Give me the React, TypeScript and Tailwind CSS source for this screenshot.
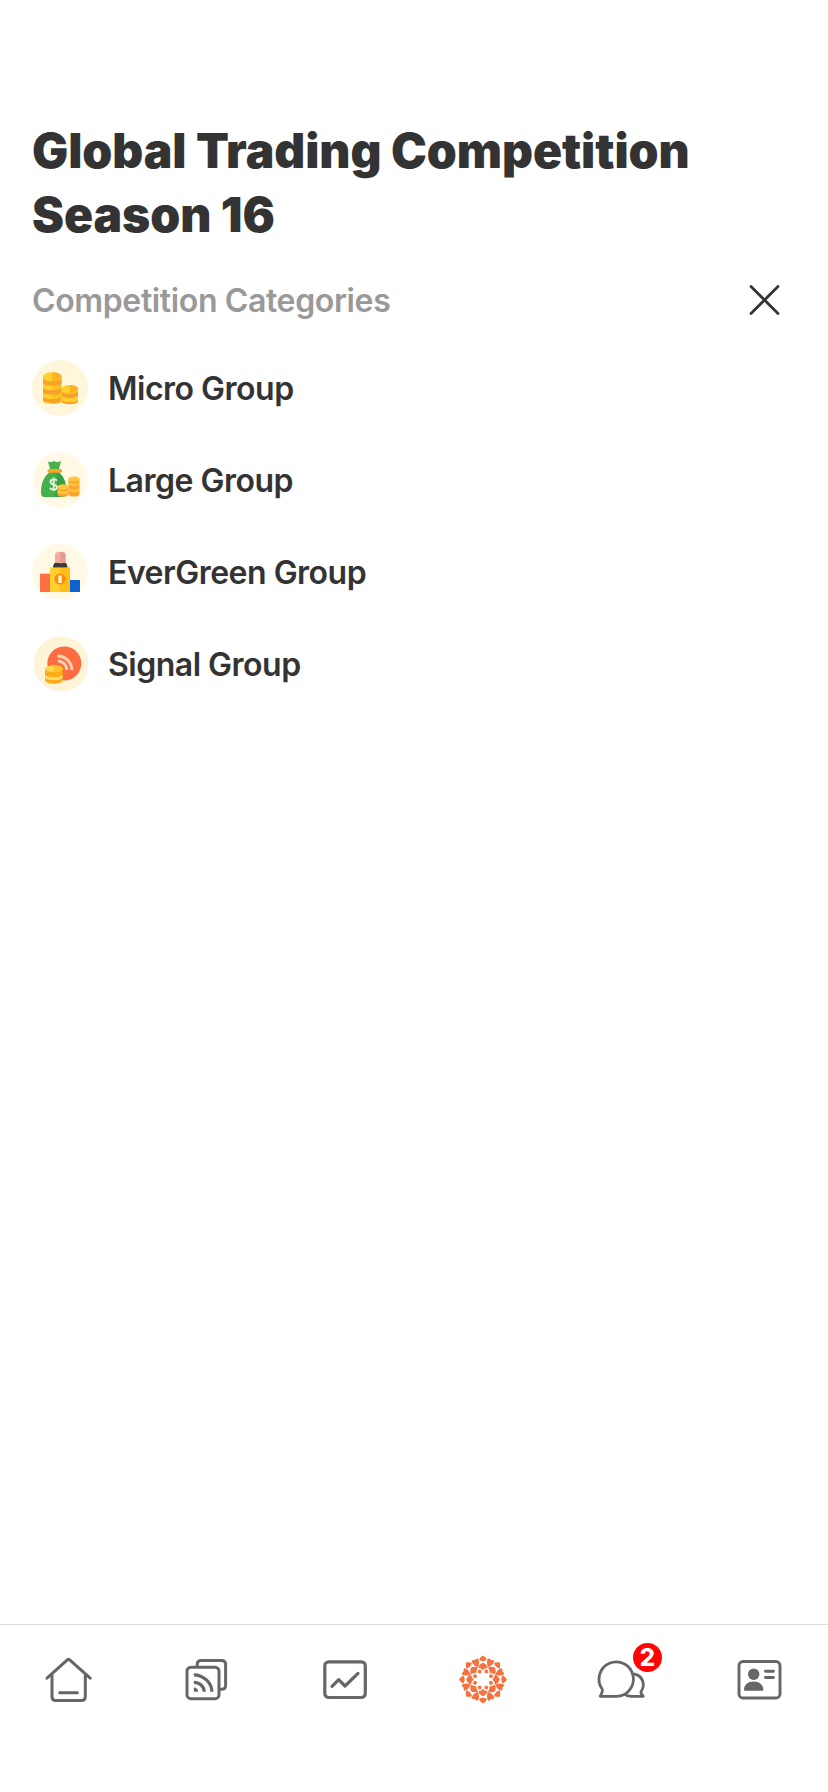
import type { ReactNode } from 'react';

function MicroIcon() {
  return (
    <svg viewBox="12 10 56 56" className="h-14 w-14 shrink-0">
      <circle cx="40" cy="38" r="28" fill="#fff6dc" />
      <path d="M23 26v25c0 4 18.500 4 18.500 0V26z" fill="#ffd02c" />
      <path d="M32 26h9.500v25c0 2-4 3-9.500 3z" fill="#fcc022" />
      <path d="M23 29v4.500c3 3 15.500 3 18.500 0V29c-3 3-15.500 3-18.500 0zM23 38v4.500c3 3 15.500 3 18.500 0V38c-3 3-15.500 3-18.500 0zM23 47v3.500c3 3 15.500 3 18.500 0V47c-3 3-15.500 3-18.500 0z" fill="#f7a12b" />
      <ellipse cx="32.200" cy="26.500" rx="9.300" ry="4.300" fill="#ffd02c" />
      <path d="M32.200 22.200c5 0 9.300 2 9.300 4.300s-4 4.300-9.300 4.300z" fill="#fbb420" />
      <path d="M41.500 39v12c0 4 16.500 4 16.500 0V39z" fill="#ffd02c" />
      <path d="M41.500 41.500v4.500c3 2.500 13.500 2.500 16.500 0v-4.500c-3 3-13.500 3-16.500 0zM41.500 50v2c3 3 13.500 3 16.500 0v-2c-3 3-13.500 3-16.500 0z" fill="#f7a12b" />
      <ellipse cx="49.700" cy="39" rx="8.300" ry="4" fill="#ffd02c" />
      <path d="M49.700 35c4.500 0 8.300 2 8.300 4s-4 4-8.300 4z" fill="#fbb420" />
    </svg>
  );
}

function LargeIcon() {
  return (
    <svg viewBox="12 13 56 56" className="h-14 w-14 shrink-0">
      <circle cx="40" cy="41" r="27.700" fill="#fff9e6" />
      <path d="M28 22.500l3 .8 3-1.300 3 1.300 4-1-2 7.700h-9zM30 33h8c6 4 8 10 8 19 0 4-1 6-4 6H25c-3 0-4-2-4-5 0-9 3-16 9-20z" fill="#45b04c" />
      <path d="M36 33h2c6 4 8 10 8 19 0 4-1 6-4 6h-8c4-7 4-17 2-25z" fill="#359f47" />
      <rect x="27.500" y="30" width="14.500" height="3.700" rx="1.500" fill="#f5a623" />
      <path d="M37 41.700c-1-2-6.500-2-6.500 1.300s6.500 2 6.500 5.200-5.800 3-7 .8M33.700 38.500v13.500" fill="none" stroke="#f2faee" strokeWidth="1.700" />
      <path d="M48.500 40v15c0 3.500 11 3.500 11 0V40z" fill="#fba62b" />
      <path d="M48.500 43c3 2 8 2 11 0v2.500c-3 2-8 2-11 0zM48.500 49c3 2 8 2 11 0v2.500c-3 2-8 2-11 0z" fill="#ffc83c" />
      <ellipse cx="54" cy="40" rx="5.500" ry="2.400" fill="#ffc83c" />
      <path d="M37.500 48v7.500c0 3 11 3 11 0V48z" fill="#fba62b" />
      <path d="M37.500 51c3 2 8 2 11 0v2.500c-3 2-8 2-11 0z" fill="#ffc83c" />
      <ellipse cx="43" cy="48" rx="5.500" ry="2.700" fill="#ffc83c" />
    </svg>
  );
}

function EverGreenIcon() {
  return (
    <svg viewBox="12 14 56 56" className="h-14 w-14 shrink-0">
      <circle cx="40" cy="41.500" r="28" fill="#fff9e6" />
      <path d="M20 43.700h10V62H20z" fill="#ff6f43" />
      <path d="M50 50h10v12H50z" fill="#0c62d2" />
      <path d="M30 37.500h10V62H30z" fill="#ffd02f" />
      <path d="M40 37.500h10V62H40z" fill="#ffbd18" />
      <path d="M33 37.500c0-3 1.500-5 3-5h8.500c1.500 0 3 2 3 5z" fill="#3a3a3c" />
      <path d="M35 24.700c0-2 2-3 5.300-3s5.200 1 5.200 3v7.300c-2 1.600-8.500 1.600-10.500 0z" fill="#f7aaa0" />
      <path d="M40.300 21.700c3.200 0 5.200 1 5.200 3v7.300c-1 1-3 1.300-5.200 1.300z" fill="#e69b94" />
      <circle cx="40" cy="49" r="5.500" fill="#fb8c0a" />
      <path d="M38.300 45.500h3.400v7.500h-3.400z" fill="#fff3cf" />
    </svg>
  );
}

function SignalIcon() {
  return (
    <svg viewBox="12 11.500 56 56" className="h-14 w-14 shrink-0">
      <circle cx="41.200" cy="39.500" r="27.500" fill="#fff3d8" />
      <circle cx="44.300" cy="39" r="17" fill="#fd6c40" />
      <path d="M37.500 31.500c8 0 14 6 14.500 14M38 36.500c5 .5 8.500 4 9 9" fill="none" stroke="#ffd3b8" strokeWidth="2.800" />
      <path d="M25 44v11.500c0 5 17.700 5 17.700 0V44z" fill="#fbab16" />
      <path d="M25 50.500c3 3 14.700 3 17.700 0v3c-3 3-14.700 3-17.700 0z" fill="#ffdc6b" />
      <ellipse cx="33.900" cy="44.300" rx="8.900" ry="3.500" fill="#ffd64f" />
      <path d="M33.900 40.800c5 0 8.900 1.500 8.900 3.500s-4 3.500-8.900 3.500z" fill="#fdc22c" />
    </svg>
  );
}

function HomeIcon() {
  return (
    <svg viewBox="0 0 52 52" className="h-13 w-13" fill="none" stroke="#666" strokeWidth="3" strokeLinecap="round" strokeLinejoin="round">
      <path d="M4 25.200 24.600 6.700q.9-.8 1.800 0L47.200 25.200" />
      <path d="M9 22.300v21.300q0 4 4 4h25.300q4 0 4-4V22.300M16.700 39.800h17.700" />
    </svg>
  );
}

function FeedIcon() {
  return (
    <svg viewBox="0 0 52 52" className="h-13 w-13" fill="none" stroke="#666" strokeWidth="3">
      <path d="M16.200 13.700V11.500q0-4 4-4h20.400q4 0 4 4v20.800q0 4-4 4h-2" />
      <rect x="6" y="14.200" width="32" height="31.500" rx="4" />
      <path d="M12.900 21.800c9.500 0 18 8 18 17M12.900 29.300c5.500 0 10.300 4 10.300 9.500" strokeWidth="3.200" />
      <path d="M12.900 34.500c2.700 0 4.200 1.600 4.200 4.300h-4.200z" fill="#666" stroke="none" />
    </svg>
  );
}

function ChartIcon() {
  return (
    <svg viewBox="0 0 52 52" className="h-13 w-13" fill="none" stroke="#666" strokeWidth="3.200" strokeLinecap="round" strokeLinejoin="round">
      <rect x="5.800" y="8.800" width="40.500" height="35.700" rx="4" />
      <path d="m13 33.400 6.700-6.700 6.300 6.300 13-12.600" />
    </svg>
  );
}

const PETALS = [0, 45, 90, 135, 180, 225, 270, 315];

function FlowerIcon() {
  return (
    <svg viewBox="-26 -26.500 52 52" className="h-13 w-13" fill="#f5713f">
      {PETALS.map((angle) => (
        <g key={angle} transform={`rotate(${angle})`}>
          <path d="M0-24q2.600 1.500 4 4.300Q2.300-18.300 0-18.300t-4-1.400Q-2.600-22.500 0-24z" />
          <path d="M0-17q3.600 1.400 4.900 4.900Q1.800-11.400 0-9.400-1.800-11.400-4.900-12.100-3.600-15.600 0-17z" />
          <path
            d="M-3.200-21.800Q-1.200-21.900 0-21 1.200-21.900 3.200-21.800 4.500-17.500 0-13.300-4.500-17.500-3.200-21.800z"
            transform="rotate(22.500)"
          />
          <path d="M0-11 2.200-8.800Q1.300-7 0-6.400-1.300-7-2.200-8.800z" transform="rotate(22.500)" />
        </g>
      ))}
    </svg>
  );
}

function ChatIcon() {
  return (
    <svg viewBox="0 0 52 52" className="h-13 w-13" fill="none" stroke="#666" strokeWidth="2.800" strokeLinejoin="round">
      <path d="M5.200 43.300h16.300a17.200 17.200 0 1 0-14.500-7.500q1.300 2-1.800 7.500z" />
      <path d="M38.500 21c9 .8 12.500 11 7.500 17.500q-.5 2 2.300 4.800H36.500q-4 0-6.500-2" />
    </svg>
  );
}

function ProfileIcon() {
  return (
    <svg viewBox="0 0 52 52" className="h-13 w-13" fill="none" stroke="#666" strokeWidth="2.900" strokeLinecap="round">
      <rect x="6" y="8.500" width="41" height="36.500" rx="4" />
      <circle cx="20.700" cy="21.200" r="5.700" fill="#666" stroke="none" />
      <path d="M11 36.700c0-5 4-8.200 9.600-8.200s9.700 3.200 9.700 8.200q0 1-1 1H12q-1 0-1-1z" fill="#666" stroke="none" />
      <path d="M32.500 18.300h8M32.500 24.500h8" />
    </svg>
  );
}

interface Category {
  name: string;
  icon: ReactNode;
}

const categories: Category[] = [
  { name: 'Micro Group', icon: <MicroIcon /> },
  { name: 'Large Group', icon: <LargeIcon /> },
  { name: 'EverGreen Group', icon: <EverGreenIcon /> },
  { name: 'Signal Group', icon: <SignalIcon /> },
];

const tabs = [
  { label: 'Home', icon: <HomeIcon /> },
  { label: 'Feed', icon: <FeedIcon /> },
  { label: 'Charts', icon: <ChartIcon /> },
  { label: 'Discover', icon: <FlowerIcon /> },
  { label: 'Chat', icon: <ChatIcon />, badge: 2 },
  { label: 'Profile', icon: <ProfileIcon /> },
];

export default function App() {
  return (
    <div className="flex h-[1792px] w-[828px] flex-col bg-white font-['Inter',sans-serif] text-[#333]">
      <main className="flex-1 px-8 pt-[119px]">
        <h1 className="text-[48px] leading-[64px] font-black tracking-[-0.05px] whitespace-nowrap">
          Global Trading Competition
          <br />
          Season 16
        </h1>

        <div className="mt-[25px] flex h-14 items-center justify-between">
          <h2 className="pt-0.5 text-[32px] font-semibold tracking-[-0.37px] text-[#999]">Competition Categories</h2>
          <button aria-label="Close" className="mr-4">
            <svg viewBox="0 0 32 32" className="h-8 w-8" fill="none" stroke="#333" strokeWidth="2.800" strokeLinecap="round">
              <path d="m3 2.500 27 27M30 2.500l-27 27" />
            </svg>
          </button>
        </div>

        <ul className="mt-8 flex flex-col gap-9">
          {categories.map((category) => (
            <li key={category.name} className="flex h-14 items-center gap-5">
              {category.icon}
              <span className="pt-0.5 text-[32px] font-semibold tracking-[-0.5px]">{category.name}</span>
            </li>
          ))}
        </ul>
      </main>

      <nav className="grid h-[168px] grid-cols-6 border-t border-[#ddd] pt-[28px]">
        {tabs.map((tab) => (
          <button key={tab.label} aria-label={tab.label} className="flex items-start justify-center">
            <span className="relative">
              {tab.icon}
              {tab.badge && (
                <span className="absolute -top-[10px] left-[38px] flex h-[29px] w-[29px] items-center justify-center rounded-full bg-[#ff0505] text-[24px] leading-none font-extrabold text-white">
                  {tab.badge}
                </span>
              )}
            </span>
          </button>
        ))}
      </nav>
    </div>
  );
}
